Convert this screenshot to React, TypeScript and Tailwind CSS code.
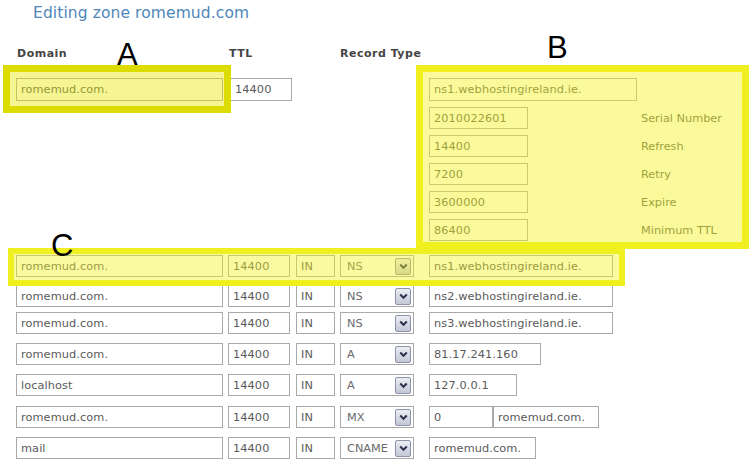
import React from 'react';

type Rec = {
  name: string;
  type: string;
  values: { text: string; w: number }[];
  mt: string;
};

const records: Rec[] = [
  { name: 'romemud.com.', type: 'NS', values: [{ text: 'ns1.webhostingireland.ie.', w: 184 }], mt: 'mt-0' },
  { name: 'romemud.com.', type: 'NS', values: [{ text: 'ns2.webhostingireland.ie.', w: 184 }], mt: 'mt-[8px]' },
  { name: 'romemud.com.', type: 'NS', values: [{ text: 'ns3.webhostingireland.ie.', w: 184 }], mt: 'mt-[5px]' },
  { name: 'romemud.com.', type: 'A', values: [{ text: '81.17.241.160', w: 112 }], mt: 'mt-[9px]' },
  { name: 'localhost', type: 'A', values: [{ text: '127.0.0.1', w: 88 }], mt: 'mt-[9px]' },
  {
    name: 'romemud.com.',
    type: 'MX',
    values: [
      { text: '0', w: 64 },
      { text: 'romemud.com.', w: 106 },
    ],
    mt: 'mt-[10px]',
  },
  { name: 'mail', type: 'CNAME', values: [{ text: 'romemud.com.', w: 107 }], mt: 'mt-[9px]' },
];

const soa = [
  { value: '2010022601', label: 'Serial Number' },
  { value: '14400', label: 'Refresh' },
  { value: '7200', label: 'Retry' },
  { value: '3600000', label: 'Expire' },
  { value: '86400', label: 'Minimum TTL' },
];

function Field({ text, w, h = 'h-[22px]' }: { text: string; w: number; h?: string }) {
  return (
    <div
      className={`${h} shrink-0 border border-[#a9a9a9] bg-white px-[4px] flex items-center text-[11.3px] leading-[13px] text-[#5a5a5a] tracking-[0.1px] whitespace-nowrap overflow-hidden`}
      style={{ width: w }}
    >
      {text}
    </div>
  );
}

function Select({ value }: { value: string }) {
  return (
    <div className="h-[22px] w-[74px] shrink-0 border border-[#a9a9a9] bg-white pl-[6px] pr-[2px] flex items-center justify-between text-[11.3px] leading-[13px] text-[#6a6a6a]">
      <span>{value}</span>
      <span className="h-[17px] w-[16px] border border-[#8d93a8] rounded-[2px] bg-gradient-to-b from-[#eceef4] to-[#c3c7d6] flex items-center justify-center">
        <svg width="9" height="7" viewBox="0 0 9 7">
          <polyline points="1.2,1.5 4.5,4.8 7.8,1.5" fill="none" stroke="#2e3450" strokeWidth="2" />
        </svg>
      </span>
    </div>
  );
}

export default function App() {
  return (
    <div className="relative w-[751px] h-[464px] overflow-hidden bg-white font-['DejaVu_Sans',sans-serif]">
      {/* --- cabecera --- */}
      <h1 className="pl-[33px] pt-[4px] text-[15.5px] leading-[18px] tracking-[0.1px] text-[#4f86bb]">
        Editing zone romemud.com
      </h1>

      <div className="flex mt-[25px] text-[11px] leading-[13px] font-bold tracking-[0.5px] text-[#454545]">
        <span className="ml-[17px] w-[212px]">Domain</span>
        <span className="w-[111px]">TTL</span>
        <span>Record Type</span>
      </div>

      {/* --- SOA --- */}
      <div className="flex mt-[18px]">
        <div className="pl-[16px] flex gap-[7px]">
          <Field text="romemud.com." w={207} h="h-[23px]" />
          <Field text="14400" w={62} h="h-[23px]" />
        </div>
        <div className="ml-[137px] flex flex-col">
          <Field text="ns1.webhostingireland.ie." w={208} h="h-[23px]" />
          <div className="mt-[6px] flex flex-col gap-[6px]">
            {soa.map((s) => (
              <div key={s.label} className="flex items-center">
                <Field text={s.value} w={99} />
                <span className="ml-[113px] text-[11.3px] leading-[13px] text-[#5a5a5a] whitespace-nowrap">{s.label}</span>
              </div>
            ))}
          </div>
        </div>
      </div>

      {/* --- registros --- */}
      <div className="mt-[14px] flex flex-col">
        {records.map((r, i) => (
          <div key={i} className={`${r.mt} pl-[16px] flex items-center`}>
            <Field text={r.name} w={207} />
            <div className="ml-[5px]">
              <Field text="14400" w={62} />
            </div>
            <div className="ml-[6px]">
              <Field text="IN" w={39} />
            </div>
            <div className="ml-[5px]">
              <Select value={r.type} />
            </div>
            <div className="ml-[15px] flex">
              {r.values.map((v, j) => (
                <Field key={j} text={v.text} w={v.w} />
              ))}
            </div>
          </div>
        ))}
      </div>

      {/* --- anotaciones --- */}
      <div className="absolute left-[3px] top-[65px] w-[228px] h-[48px] border-[7px] border-[#dcdc00] bg-[rgba(232,232,0,0.42)]" />
      <div className="absolute left-[416px] top-[65px] w-[333px] h-[184px] border-[7px] border-[#f0f020] bg-[rgba(244,244,30,0.45)]" />
      <div className="absolute left-[8px] top-[248px] w-[617px] h-[38px] border-[6px] border-[#f0f020] bg-[rgba(244,244,30,0.42)]" />

      <span className="absolute left-[117px] top-[43px] text-[31px] leading-[24px] text-black font-['Liberation_Sans',sans-serif]">A</span>
      <span className="absolute left-[547px] top-[36px] text-[31px] leading-[24px] text-black font-['Liberation_Sans',sans-serif]">B</span>
      <span className="absolute left-[51px] top-[234px] text-[31px] leading-[24px] text-black font-['Liberation_Sans',sans-serif]">C</span>
    </div>
  );
}
